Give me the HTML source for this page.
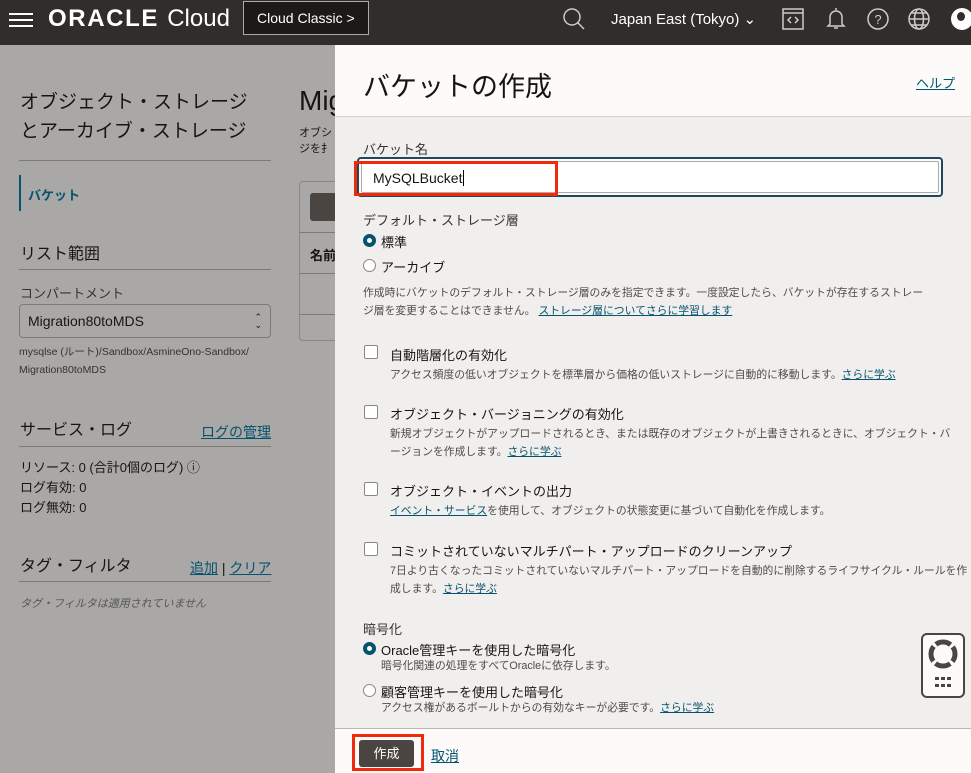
<!DOCTYPE html>
<html><head><meta charset="utf-8"><style>
*{box-sizing:border-box;margin:0;padding:0}
body{width:971px;height:773px;overflow:hidden;position:relative;font-family:"Liberation Sans","Noto Sans CJK JP",sans-serif;color:#161513;background:#a9a8a6}
.top{position:absolute;left:0;top:0;width:971px;height:45px;background:#312d2a;color:#fff}
.abs{position:absolute;white-space:nowrap}
.left{position:absolute;left:0;top:45px;width:335px;height:728px;background:#a9a8a6}
.hr{position:absolute;height:1px;background:#7d7a76}
a{color:#04536f;text-decoration:underline}
.panel{position:absolute;left:335px;top:45px;width:636px;height:728px;background:#f1efed}
.ph{position:absolute;left:0;top:0;width:636px;height:72px;background:#fcfbfa;border-bottom:1px solid #d6d3cf}
.pf{position:absolute;left:0;top:683px;width:636px;height:45px;background:#fcfbfa;border-top:1px solid #bcb8b3}
.t{position:absolute;font-size:13px;white-space:nowrap}
.s{position:absolute;font-size:10.8px;color:#4f4b47;white-space:nowrap;line-height:18px}
.cb{position:absolute;width:14px;height:14px;border:1px solid #8a8680;background:#fff;border-radius:2px}
.rd{position:absolute;width:13px;height:13px;border-radius:50%;border:1px solid #8a8680;background:#fff}
.rd.on{border:4px solid #04536f;background:#fff}
</style></head><body>
<div class="top">
 <div class="abs" style="left:9px;top:13px;width:24px;height:2px;background:#fff;box-shadow:0 6px 0 #fff,0 12px 0 #fff"></div>
 <div class="abs" style="left:48px;top:5px;font-size:24px;font-weight:bold;letter-spacing:1.6px">ORACLE <span style="font-weight:normal;letter-spacing:0">Cloud</span></div>
 <div class="abs" style="left:243px;top:1px;width:126px;height:34px;border:1px solid #aaa;background:#1c1a18;font-size:14px;line-height:32px;padding-left:13px">Cloud Classic &gt;</div>
 <svg class="abs" style="left:562px;top:7px" width="24" height="24" viewBox="0 0 24 24" fill="none" stroke="#ccc" stroke-width="1.5"><circle cx="10" cy="10" r="8"/><path d="M16 16l6 6"/></svg>
 <div class="abs" style="left:611px;top:10px;font-size:15px">Japan East (Tokyo) ⌄</div>
 <svg class="abs" style="left:781px;top:7px" width="24" height="24" viewBox="0 0 24 24" fill="none" stroke="#ccc" stroke-width="1.5"><rect x="2" y="2" width="20" height="20"/><path d="M2 6h20M10 10l-3 3 3 3M14 10l3 3-3 3"/></svg>
 <svg class="abs" style="left:824px;top:6px" width="24" height="26" viewBox="0 0 24 26" fill="none" stroke="#ccc" stroke-width="1.5"><path d="M12 2v2M6 18V11a6 6 0 0112 0v7l2 2H4zM10 22h4"/></svg>
 <svg class="abs" style="left:866px;top:7px" width="24" height="24" viewBox="0 0 24 24" fill="none" stroke="#ccc" stroke-width="1.5"><circle cx="12" cy="12" r="10"/><text x="12" y="17" font-size="13" fill="#ccc" stroke="none" text-anchor="middle" font-family="Liberation Sans">?</text></svg>
 <svg class="abs" style="left:907px;top:7px" width="24" height="24" viewBox="0 0 24 24" fill="none" stroke="#ccc" stroke-width="1.5"><circle cx="12" cy="12" r="10"/><ellipse cx="12" cy="12" rx="4.5" ry="10"/><path d="M2 12h20M4 6h16M4 18h16"/></svg>
 <div class="abs" style="left:951px;top:8px;width:22px;height:22px;border-radius:50%;background:#fff"><div style="margin:4px 0 0 6px;width:8px;height:9px;border-radius:50%;background:#312d2a"></div></div>
</div>
<div class="left">
 <div class="abs" style="left:20px;top:43px;font-size:19px;line-height:29px;color:#161513">オブジェクト・ストレージ<br>とアーカイブ・ストレージ</div>
 <div class="hr" style="left:19px;top:115px;width:252px"></div>
 <div class="abs" style="left:19px;top:130px;width:2px;height:36px;background:#04536f"></div>
 <div class="abs" style="left:28px;top:140px;font-size:13px;font-weight:bold;color:#04536f">バケット</div>
 <div class="abs" style="left:20px;top:195px;font-size:16px">リスト範囲</div>
 <div class="hr" style="left:19px;top:224px;width:252px"></div>
 <div class="abs" style="left:20px;top:238px;font-size:13px;color:#333">コンパートメント</div>
 <div class="abs" style="left:19px;top:259px;width:252px;height:34px;border:1px solid #7d7a76;border-radius:4px;font-size:14px;line-height:32px;padding-left:8px">Migration80toMDS<span style="position:absolute;right:8px;top:0;font-size:9px;line-height:8px;padding-top:8px;text-align:center">⌃<br>⌄</span></div>
 <div class="abs" style="left:19px;top:298px;font-size:10.5px;line-height:18px;color:#333">mysqlse (ルート)/Sandbox/AsmineOno-Sandbox/<br>Migration80toMDS</div>
 <div class="abs" style="left:20px;top:371px;font-size:16px">サービス・ログ</div>
 <a class="abs" style="left:201px;top:377px;font-size:14px">ログの管理</a>
 <div class="hr" style="left:19px;top:401px;width:252px"></div>
 <div class="abs" style="left:20px;top:413px;font-size:13px;line-height:20px">リソース: 0 (合計0個のログ) ⓘ<br>ログ有効: 0<br>ログ無効: 0</div>
 <div class="abs" style="left:20px;top:507px;font-size:16px">タグ・フィルタ</div>
 <div class="abs" style="left:190px;top:513px;font-size:14px"><a>追加</a> | <a>クリア</a></div>
 <div class="hr" style="left:19px;top:536px;width:252px"></div>
 <div class="abs" style="left:20px;top:550px;font-size:11px;font-style:italic;color:#555">タグ・フィルタは適用されていません</div>
 <div class="abs" style="left:299px;top:40px;font-size:28px">Mig</div>
 <div class="abs" style="left:299px;top:80px;font-size:11px;line-height:16px">オブシ<br>ジを扌</div>
 <div class="abs" style="left:299px;top:136px;width:40px;height:160px;border:1px solid #8a8680;border-right:none;border-radius:4px 0 0 4px"></div>
 <div class="abs" style="left:310px;top:148px;width:30px;height:28px;background:#4a4541;border-radius:3px"></div>
 <div class="hr" style="left:299px;top:187px;width:36px"></div>
 <div class="abs" style="left:310px;top:200px;font-size:13px;font-weight:bold">名前</div>
 <div class="hr" style="left:299px;top:228px;width:36px"></div>
 <div class="hr" style="left:299px;top:269px;width:36px"></div>
</div>
<div class="panel">
 <div class="ph">
  <div class="abs" style="left:28px;top:20px;font-size:27px">バケットの作成</div>
  <a class="abs" style="left:581px;top:28px;font-size:13px">ヘルプ</a>
 </div>
 <div class="t" style="left:28px;top:94px;color:#333">バケット名</div>
 <div class="abs" style="left:22px;top:112px;width:586px;height:40px;border:2px solid #1d4a5a;border-radius:4px;background:#fcfbfa"></div>
 <div class="abs" style="left:26px;top:116px;width:578px;height:32px;border:1px solid #aaa;border-radius:2px;background:#fff"></div>
 <div class="abs" style="left:19px;top:116px;width:204px;height:35px;border:3px solid #f02a0e"></div>
 <div class="t" style="left:38px;top:125px;font-size:14px">MySQLBucket<span style="border-left:1px solid #000;margin-left:1px"></span></div>
 <div class="t" style="left:28px;top:165px;color:#333">デフォルト・ストレージ層</div>
 <div class="rd on" style="left:28px;top:189px"></div><div class="t" style="left:46px;top:187px">標準</div>
 <div class="rd" style="left:28px;top:214px"></div><div class="t" style="left:46px;top:212px">アーカイブ</div>
 <div class="s" style="left:28px;top:239px">作成時にバケットのデフォルト・ストレージ層のみを指定できます。一度設定したら、バケットが存在するストレー<br>ジ層を変更することはできません。 <a>ストレージ層についてさらに学習します</a></div>
 <div class="cb" style="left:29px;top:300px"></div><div class="t" style="left:55px;top:300px">自動階層化の有効化</div>
 <div class="s" style="left:55px;top:321px">アクセス頻度の低いオブジェクトを標準層から価格の低いストレージに自動的に移動します。<a>さらに学ぶ</a></div>
 <div class="cb" style="left:29px;top:360px"></div><div class="t" style="left:55px;top:359px">オブジェクト・バージョニングの有効化</div>
 <div class="s" style="left:55px;top:380px">新規オブジェクトがアップロードされるとき、または既存のオブジェクトが上書きされるときに、オブジェクト・バ<br>ージョンを作成します。<a>さらに学ぶ</a></div>
 <div class="cb" style="left:29px;top:437px"></div><div class="t" style="left:55px;top:436px">オブジェクト・イベントの出力</div>
 <div class="s" style="left:55px;top:457px"><a>イベント・サービス</a>を使用して、オブジェクトの状態変更に基づいて自動化を作成します。</div>
 <div class="cb" style="left:29px;top:497px"></div><div class="t" style="left:55px;top:496px">コミットされていないマルチパート・アップロードのクリーンアップ</div>
 <div class="s" style="left:55px;top:517px">7日より古くなったコミットされていないマルチパート・アップロードを自動的に削除するライフサイクル・ルールを作<br>成します。<a>さらに学ぶ</a></div>
 <div class="t" style="left:28px;top:574px;color:#333">暗号化</div>
 <div class="rd on" style="left:28px;top:597px"></div><div class="t" style="left:46px;top:595px">Oracle管理キーを使用した暗号化</div>
 <div class="s" style="left:46px;top:612px">暗号化関連の処理をすべてOracleに依存します。</div>
 <div class="rd" style="left:28px;top:639px"></div><div class="t" style="left:46px;top:637px">顧客管理キーを使用した暗号化</div>
 <div class="s" style="left:46px;top:654px">アクセス権があるボールトからの有効なキーが必要です。<a>さらに学ぶ</a></div>
 <div class="abs" style="left:586px;top:588px;width:44px;height:65px;border:2px solid #4a4541;border-radius:6px;background:#fcfbfa">
  <svg width="40" height="61" viewBox="0 0 40 61"><circle cx="20" cy="19" r="12" fill="none" stroke="#4a4541" stroke-width="5"/><circle cx="20" cy="19" r="12" fill="none" stroke="#fff" stroke-width="5" stroke-dasharray="3 15.8" stroke-dashoffset="-8"/><g fill="#4a4541"><rect x="12" y="42" width="4" height="3"/><rect x="18" y="42" width="4" height="3"/><rect x="24" y="42" width="4" height="3"/><rect x="12" y="49" width="4" height="3"/><rect x="18" y="49" width="4" height="3"/><rect x="24" y="49" width="4" height="3"/></g></svg>
 </div>
 <div class="pf">
  <div class="abs" style="left:17px;top:5px;width:72px;height:37px;border:3px solid #f02a0e"></div>
  <div class="abs" style="left:24px;top:11px;width:55px;height:27px;background:#4a4541;color:#fff;font-size:13px;line-height:27px;text-align:center;border-radius:3px">作成</div>
  <a class="abs" style="left:96px;top:17px;font-size:14px">取消</a>
 </div>
</div>
</body></html>
